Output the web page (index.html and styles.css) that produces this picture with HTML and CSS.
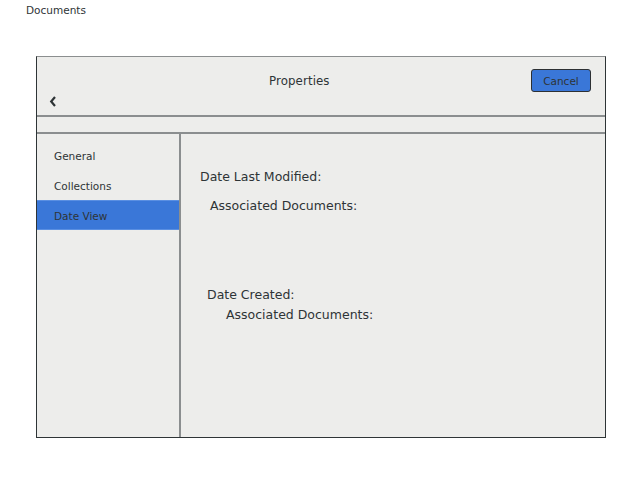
FILE: index.html
```html
<!DOCTYPE html>
<html>
<head>
<meta charset="utf-8">
<link rel="stylesheet" href="styles.css">
</head>
<body>
<div class="page-title">Documents</div>
<div class="window">
  <div class="header">
    <div class="header-row">
      <span class="title">Properties</span>
      <button class="cancel">Cancel</button>
    </div>
    <div class="back-row">
      <svg class="back" width="8" height="11" viewBox="0 0 8 11"><path d="M6 1 L2.2 5.5 L6 10" fill="none" stroke="#2e3436" stroke-width="2.2"/></svg>
    </div>
  </div>
  <div class="strip"></div>
  <div class="body">
    <div class="sidebar">
      <div class="item">General</div>
      <div class="item">Collections</div>
      <div class="item selected">Date View</div>
    </div>
    <div class="main">
      <div class="label l1">Date Last Modified:</div>
      <div class="label l2">Associated Documents:</div>
      <div class="label l3">Date Created:</div>
      <div class="label l4">Associated Documents:</div>
    </div>
  </div>
</div>
</body>
</html>
```
FILE: styles.css
```css
html, body {
  margin: 0;
  padding: 0;
  background: #ffffff;
}
body {
  font-family: "DejaVu Sans", sans-serif;
  color: #2e3436;
}
.page-title {
  font-size: 10.5px;
  line-height: 12px;
  padding: 4px 0 0 26px;
}
.window {
  margin: 40px 0 0 36px;
  width: 568px;
  height: 380px;
  border-top: 1px solid #8b8e8f;
  border-left: 1px solid #2e3436;
  border-right: 1px solid #2e3436;
  border-bottom: 1px solid #2e3436;
  background: #ededeb;
  display: flex;
  flex-direction: column;
}
.header {
  height: 58px;
  border-bottom: 2px solid #8b8e8f;
  box-sizing: content-box;
  display: flex;
  flex-direction: column;
}
.header-row {
  display: flex;
  align-items: center;
  height: 23px;
  margin-top: 12px;
}
.title {
  font-size: 11.8px;
  margin-left: 232px;
  letter-spacing: 0.1px;
}
.cancel {
  margin-left: auto;
  margin-right: 14px;
  width: 60px;
  height: 23px;
  box-sizing: border-box;
  border: 1px solid #2d3033;
  border-radius: 3px;
  background: #3a77d8;
  color: #2e3436;
  font-family: "DejaVu Sans", sans-serif;
  font-size: 10.5px;
  padding: 0;
}
.back-row {
  display: flex;
  margin-top: 4px;
  padding-left: 12px;
}
.back {
  display: block;
}
.strip {
  height: 15px;
  border-bottom: 2px solid #8b8e8f;
}
.body {
  flex: 1;
  display: flex;
  min-height: 0;
}
.sidebar {
  width: 142px;
  border-right: 2px solid #8b8e8f;
  padding-top: 6px;
}
.item {
  height: 30px;
  line-height: 32px;
  font-size: 10.5px;
  padding-left: 17px;
}
.item.selected {
  background: #3a77d8;
  box-shadow: inset 0 1px 0 #5a8fe2, inset 0 -1px 0 #5a8fe2;
}
.main {
  flex: 1;
  padding-top: 35px;
}
.label {
  font-size: 12.5px;
  line-height: 15px;
}
.l1 { margin-left: 19px; }
.l2 { margin-left: 29px; margin-top: 14px; }
.l3 { margin-left: 26px; margin-top: 74px; }
.l4 { margin-left: 45px; margin-top: 5px; }
```
